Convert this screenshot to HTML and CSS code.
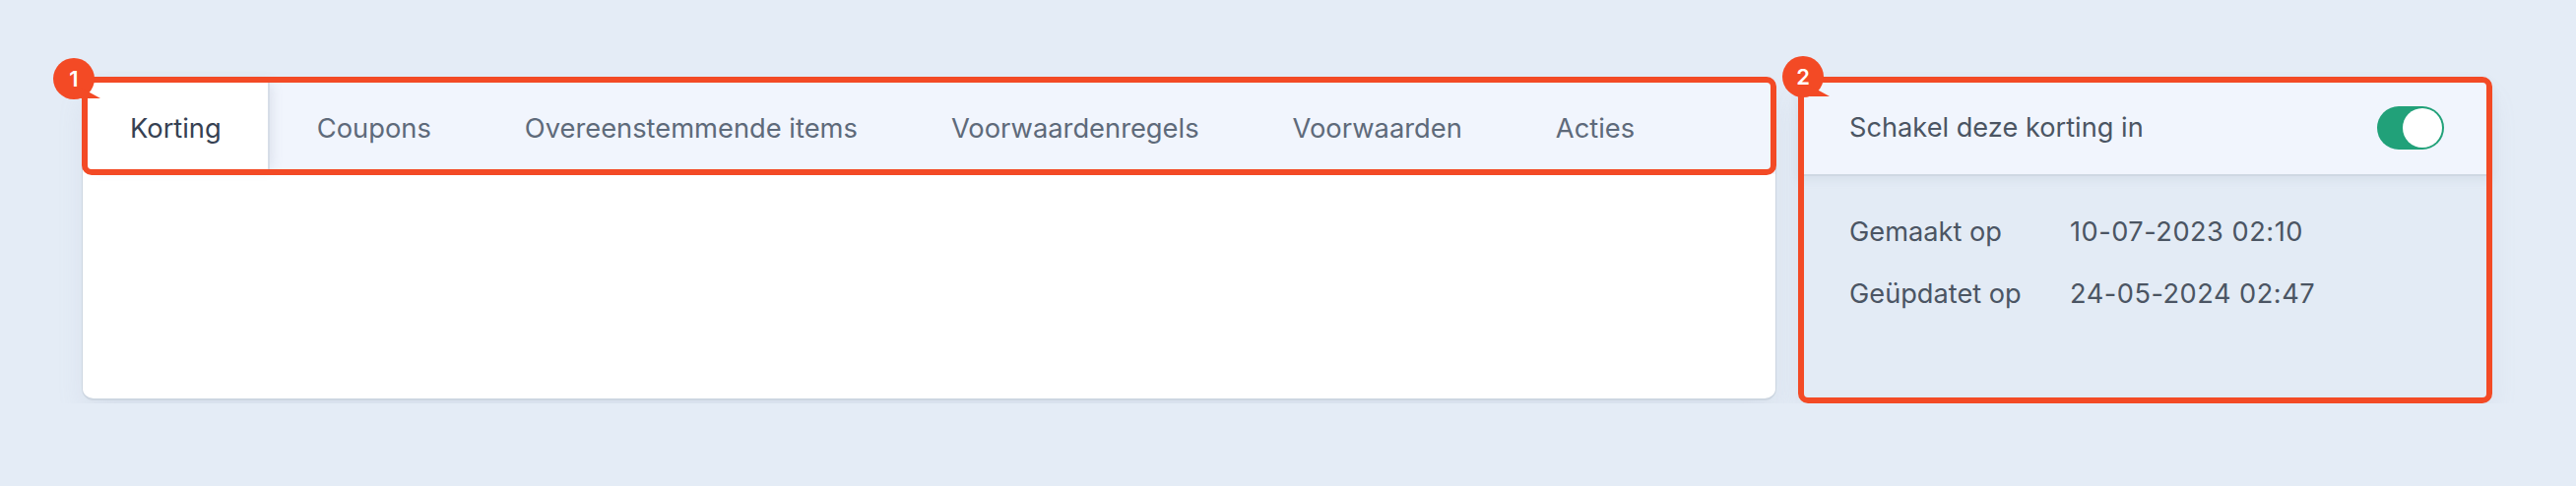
FILE: index.html
```html
<!DOCTYPE html>
<html lang="nl">
<head>
    <meta charset="UTF-8">
    <meta name="viewport" content="width=device-width, initial-scale=1.0">
    <title>Korting bewerken</title>
    <link rel="stylesheet" href="styles.css">
</head>
<body>
    <div class="page">
        <div class="layout">
            <section class="card tabs-card">
                <nav class="tab-bar">
                    <a class="tab active">Korting</a>
                    <a class="tab">Coupons</a>
                    <a class="tab">Overeenstemmende items</a>
                    <a class="tab">Voorwaardenregels</a>
                    <a class="tab">Voorwaarden</a>
                    <a class="tab">Acties</a>
                    <!-- annotatie 1 -->
                    <span class="annot"><span class="badge badge-1">1</span></span>
                </nav>
                <div class="tab-body"></div>
            </section>

            <aside class="card side-card">
                <div class="side-head">
                    <span>Schakel deze korting in</span>
                    <span class="toggle on"><span class="knob"></span></span>
                </div>
                <dl class="meta">
                    <dt>Gemaakt op</dt>
                    <dd>10-07-2023 02:10</dd>
                    <dt>Geüpdatet op</dt>
                    <dd>24-05-2024 02:47</dd>
                </dl>
                <!-- annotatie 2 -->
                <span class="annot"><span class="badge badge-2">2</span></span>
            </aside>
        </div>
    </div>
</body>
</html>
```
FILE: styles.css
```css
* {
    box-sizing: border-box;
}
body {
    margin: 0;
    background-color: #e4ecf6;
    font-family: Inter, "Noto Sans", sans-serif;
    color: #4b5563;
}
.page {
    padding: 78px 85px 0 83px;
}
.layout {
    display: grid;
    grid-template-columns: 1721px 705px;
    column-gap: 22px;
    align-items: start;
}
.card {
    position: relative;
    border-radius: 12px;
}
.tabs-card {
    height: 329px;
    background-color: #fff;
    border: 1px solid #cdd6e1;
    border-bottom-width: 2px;
    box-shadow: 0 18px 30px -6px rgba(148, 163, 184, 0.18);
}
.tab-bar {
    position: relative;
    display: flex;
    height: 98px;
    background-color: #f1f5fd;
    border-radius: 11px 11px 0 0;
}
.tab {
    display: flex;
    align-items: center;
    padding: 4px 47.5px 0;
    font-size: 27.3px;
    color: #5e6a7a;
    text-decoration: none;
    white-space: nowrap;
}
.tab.active {
    padding-left: 48px;
    background-color: #fff;
    color: #364152;
    border-right: 2px solid #d6dde7;
    border-top-left-radius: 11px;
    box-shadow: 6px 0 14px -6px rgba(100, 116, 139, 0.2);
}
.side-card {
    height: 332px;
    background-color: #e3ebf5;
    box-shadow: 0 18px 30px -6px rgba(148, 163, 184, 0.18);
}
.side-head {
    display: flex;
    justify-content: space-between;
    align-items: center;
    height: 101px;
    padding: 4px 49px 0 52px;
    background-color: #f1f5fd;
    border-bottom: 2px solid #cfd8e3;
    border-radius: 12px 12px 0 0;
    font-size: 27.2px;
    box-shadow: 0 4px 10px rgba(148, 163, 184, 0.15);
}
.toggle {
    display: flex;
    justify-content: flex-end;
    width: 68px;
    height: 44px;
    padding: 2px;
    border-radius: 22px;
    background-color: #cbd5e1;
}
.toggle.on {
    background-color: #21a179;
}
.toggle .knob {
    width: 40px;
    height: 40px;
    border-radius: 50%;
    background-color: #fff;
}
.meta {
    display: grid;
    grid-template-columns: 224px 1fr;
    row-gap: 23px;
    margin: 0;
    padding: 37px 52px;
    font-size: 27.2px;
    line-height: 40px;
}
.meta dt,
.meta dd {
    margin: 0;
}
.meta dd {
    letter-spacing: 0.5px;
}
/* rode kaders van de uitleg */
.annot {
    position: absolute;
    inset: -1px;
    border: 6px solid #f34a25;
    border-radius: 10px;
    pointer-events: none;
}
.side-card .annot {
    inset: 0;
}
.badge {
    position: absolute;
    width: 42px;
    height: 42px;
    border-radius: 50%;
    background-color: #f34a25;
    color: #fff;
    font-size: 22px;
    font-weight: 600;
    line-height: 42px;
    text-align: center;
}
.badge::after {
    content: "";
    position: absolute;
    left: 28px;
    top: 30px;
    width: 20px;
    height: 11px;
    background-color: #f34a25;
    clip-path: polygon(0 0, 100% 100%, 0 100%);
}
.badge-1 {
    left: -35px;
    top: -25px;
}
.badge-2 {
    left: -22px;
    top: -27px;
}
```
